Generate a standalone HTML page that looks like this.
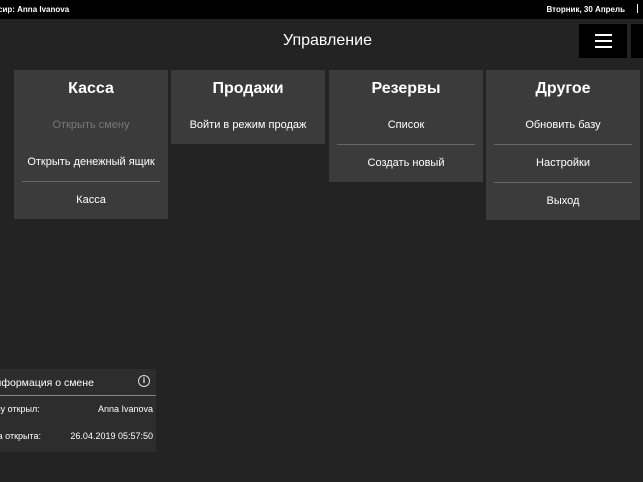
<!DOCTYPE html>
<html><head><meta charset="utf-8"><style>
body{margin:0;width:643px;height:482px;overflow:hidden;background:#232323;font-family:"Liberation Sans",sans-serif;color:#fff;position:relative}
.top{position:absolute;left:0;top:0;width:643px;height:19px;background:#000;font-size:8px;font-weight:bold}
.title{position:absolute;top:32px;left:0;width:655px;text-align:center;font-size:16px}
.btn{position:absolute;top:24px;height:34px;background:#000}
.card{position:absolute;top:70px;width:154px;background:#3b3b3b}
.card h2{margin:0;height:37px;line-height:37px;text-align:center;font-size:16px;font-weight:bold}
.it{height:37px;line-height:37px;text-align:center;font-size:11px;margin:0 8px;border-top:1px solid #666}
.it.f{border-top:none}
.dim{color:#777}
.info{position:absolute;left:0;top:369px;width:156px;height:83px;background:#2d2d2d;overflow:hidden;font-size:9px}
</style></head><body>
<div class="top"><span style="position:absolute;left:-2px;top:5px">сир: Anna Ivanova</span><span style="position:absolute;right:18px;top:5px">Вторник, 30 Апрель</span><span style="position:absolute;right:5px;top:4px;width:1px;height:9px;background:#fff"></span></div>
<div class="title">Управление</div>
<div class="btn" style="left:579px;width:48px"><div style="position:absolute;left:16px;top:10px;width:17px;height:2px;background:#fff;box-shadow:0 6px 0 #fff,0 12px 0 #fff"></div></div>
<div class="btn" style="left:631px;width:12px"></div>
<div class="card" style="left:14px"><h2>Касса</h2><div class="it f dim">Открыть смену</div><div class="it f">Открыть денежный ящик</div><div class="it">Касса</div></div>
<div class="card" style="left:171px"><h2>Продажи</h2><div class="it f">Войти в режим продаж</div></div>
<div class="card" style="left:329px"><h2>Резервы</h2><div class="it f">Список</div><div class="it">Создать новый</div></div>
<div class="card" style="left:486px"><h2>Другое</h2><div class="it f">Обновить базу</div><div class="it">Настройки</div><div class="it">Выход</div></div>
<div class="info">
<div style="position:absolute;left:-12px;top:8px;font-size:10.5px">Информация о смене</div>
<div style="position:absolute;left:138px;top:6px;width:10px;height:10px;border:1px solid #ddd;border-radius:50%;text-align:center;font-size:8px;line-height:10px;font-weight:bold">i</div>
<div style="position:absolute;left:0;top:26px;width:156px;height:1px;background:#888"></div>
<div style="position:absolute;left:-22px;top:35px">Смену открыл:</div><div style="position:absolute;right:3px;top:35px">Anna Ivanova</div>
<div style="position:absolute;left:-25px;top:62px">Смена открыта:</div><div style="position:absolute;right:3px;top:62px">26.04.2019 05:57:50</div>
</div>
</body></html>
